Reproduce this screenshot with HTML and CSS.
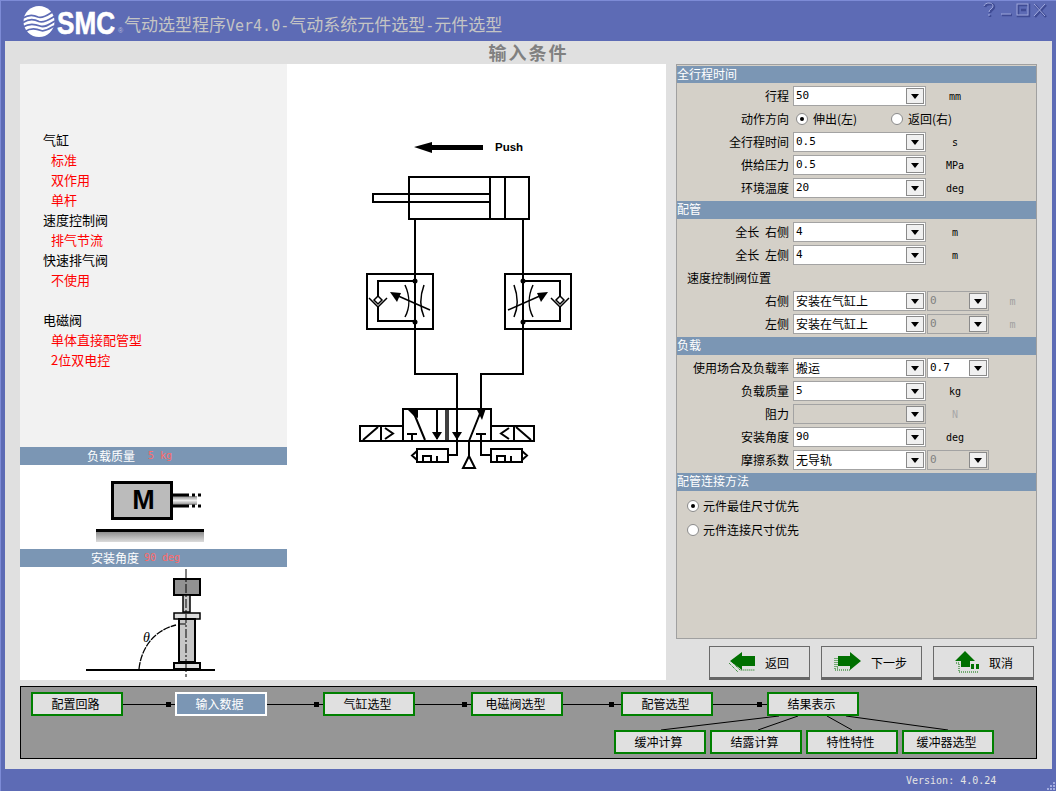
FILE: index.html
```html
<!DOCTYPE html>
<html lang="zh">
<head>
<meta charset="utf-8">
<title>SMC</title>
<link rel="stylesheet" href="styles.css">
</head>
<body>
<div class="window">
  <header class="titlebar">
    <svg class="logo" width="105" height="41" viewBox="0 0 105 41">
      <circle cx="16" cy="21.500" r="15.500" fill="#fff"/>
      <g fill="none" stroke="#5d6bb5" stroke-width="1.800">
        <path d="M0 18 C6 14 11 15 15 17 C20 19 26 14 31 11"/>
        <path d="M0 22.500 C6 18.500 12 19.500 16 21.500 C21 23.500 27 19 32 16"/>
        <path d="M0 27 C6 23 12 24 17 26 C22 28 27 24 32 21"/>
        <path d="M2 31.500 C8 27.500 13 28.500 18 30.500 C22 32 26 29 31 26"/>
      </g>
      <text class="logo-word" x="34" y="33.500" textLength="58" lengthAdjust="spacingAndGlyphs">SMC</text>
      <text class="logo-reg" x="95" y="33">®</text>
    </svg>
    <h1 class="apptitle">气动选型程序<span class="lat-t">Ver4.0-</span>气动系统元件选型<span class="lat-t">-</span>元件选型</h1>
    <svg class="winctl" width="66" height="17" viewBox="0 0 66 17">
      <g fill="none" stroke="#3f4b94" stroke-width="2.500">
        <path d="M3 5 C4 1 12 1 12 5 C12 8 8 8 8 11 M8 13 V15"/>
        <path d="M20 13 H30"/>
        <rect x="36" y="3" width="11" height="11"/>
        <path d="M39 8 H44"/>
        <path d="M53 3 L64 15 M64 3 L53 15"/>
      </g>
      <g fill="none" stroke="#a3acdf" stroke-width="1">
        <path d="M2 4 C3 0 11 0 11 4 C11 7 7 7 7 10 M7 12 V14"/>
        <path d="M19 12 H29"/>
        <rect x="35" y="2" width="11" height="11"/>
        <path d="M52 2 L63 14 M63 2 L52 14"/>
      </g>
    </svg>
  </header>

  <div class="content">
    <h2 class="heading">输入条件</h2>
    <div class="main">
      <aside class="side">
        <div class="summary">
          <p>气缸</p>
          <p class="red">标准</p>
          <p class="red">双作用</p>
          <p class="red">单杆</p>
          <p>速度控制阀</p>
          <p class="red">排气节流</p>
          <p>快速排气阀</p>
          <p class="red">不使用</p>
          <p>&nbsp;</p>
          <p>电磁阀</p>
          <p class="red">单体直接配管型</p>
          <p class="red">2位双电控</p>
        </div>
        <div class="side-head pad-a"><span>负载质量</span><span class="pink">5 kg</span></div>
        <div class="pic pic-load">
          <svg width="267" height="84" viewBox="20 465 267 84">
            <defs>
              <linearGradient id="rod" x1="0" y1="0" x2="0" y2="1">
                <stop offset="0" stop-color="#888"/><stop offset=".5" stop-color="#eee"/><stop offset="1" stop-color="#888"/>
              </linearGradient>
              <linearGradient id="base" x1="0" y1="0" x2="0" y2="1">
                <stop offset="0" stop-color="#8e8e8e"/><stop offset="1" stop-color="#dcdcdc"/>
              </linearGradient>
            </defs>
            <rect x="112.500" y="482.500" width="59" height="36" fill="#bbb" stroke="#000" stroke-width="3"/>
            <text class="mass-m" x="143.500" y="509" text-anchor="middle">M</text>
            <rect x="173" y="496" width="24" height="9" fill="url(#rod)"/>
            <path d="M173 495 H189 M192 495 H195 M198 495 H201 M173 506 H189 M192 506 H195 M198 506 H201" stroke="#000" stroke-width="3"/>
            <rect x="96" y="529" width="108" height="3" fill="#000"/>
            <rect x="96" y="532" width="108" height="10" fill="url(#base)"/>
          </svg>
        </div>
        <div class="side-head pad-b"><span>安装角度</span><span class="pink">90 deg</span></div>
        <div class="pic pic-angle">
          <svg width="267" height="113" viewBox="20 567 267 113">
            <rect x="174" y="579" width="26" height="16" fill="#929292" stroke="#000" stroke-width="2"/>
            <rect x="183" y="595" width="7" height="17" fill="#c6c6c6" stroke="#000" stroke-width="1.500"/>
            <rect x="174" y="613" width="26" height="6" fill="#ddd" stroke="#000" stroke-width="1.500"/>
            <rect x="179" y="619" width="16" height="43" fill="#c6c6c6" stroke="#000" stroke-width="2"/>
            <rect x="174" y="663" width="26" height="6" fill="#ddd" stroke="#000" stroke-width="2"/>
            <path d="M86 670 H215" stroke="#000" stroke-width="2"/>
            <path d="M186 569 V677" stroke="#000" stroke-width="1" stroke-dasharray="9 2 2 2"/>
            <path d="M139 669 C141 650 152 631 176 625" fill="none" stroke="#000" stroke-width="1.300" stroke-dasharray="7 1"/>
            <path d="M179 624 H186" stroke="#000"/>
            <text class="theta" x="143" y="642">θ</text>
          </svg>
        </div>
      </aside>

      <section class="canvas">
        <svg width="379" height="616" viewBox="287 64 379 616">
          <g fill="none" stroke="#000" stroke-width="2">
            <rect x="409" y="177" width="120" height="42"/>
            <path d="M490 177 V219 M505 177 V219"/>
            <rect x="373" y="194" width="117" height="8"/>
            <path d="M415 219 V374 H457 V455 H448"/>
            <path d="M523 219 V374 H481 V409"/>
            <g>
              <rect x="367" y="274" width="66" height="55"/>
              <path d="M415 281 H378 V296 M378 307 V321 H415"/>
              <path d="M369 298 L378 307 L387 298" stroke-width="1.500"/>
              <path d="M374 300 L378 296 L382 300 L378 304 Z" stroke-width="1.500"/>
              <path d="M405 285 C410 296 410 308 405 317" stroke-width="1.500"/>
              <path d="M424 285 C420 296 420 308 424 317" stroke-width="1.500"/>
              <path d="M430 310 L396 295" stroke-width="1.500"/>
              <path d="M390 292 L401 293 L397 302 Z" fill="#000" stroke="none"/>
              <circle cx="415" cy="281" r="2.500" fill="#000" stroke="none"/>
              <circle cx="415" cy="322" r="2.500" fill="#000" stroke="none"/>
            </g>
            <g transform="matrix(-1 0 0 1 938 0)">
              <rect x="367" y="274" width="66" height="55"/>
              <path d="M415 281 H378 V296 M378 307 V321 H415"/>
              <path d="M369 298 L378 307 L387 298" stroke-width="1.500"/>
              <path d="M374 300 L378 296 L382 300 L378 304 Z" stroke-width="1.500"/>
              <path d="M405 285 C410 296 410 308 405 317" stroke-width="1.500"/>
              <path d="M424 285 C420 296 420 308 424 317" stroke-width="1.500"/>
              <path d="M430 310 L396 295" stroke-width="1.500"/>
              <path d="M390 292 L401 293 L397 302 Z" fill="#000" stroke="none"/>
              <circle cx="415" cy="281" r="2.500" fill="#000" stroke="none"/>
              <circle cx="415" cy="322" r="2.500" fill="#000" stroke="none"/>
            </g>
            <rect x="403" y="409" width="88" height="32"/>
            <path d="M446 409 V441 M448 409 V441" stroke-width="1.500"/>
            <rect x="360" y="426" width="43" height="15"/>
            <path d="M381 426 V441 M363 440 L378 427 M385 428 L393 433.500 L385 439"/>
            <rect x="491" y="426" width="43" height="15"/>
            <path d="M514 426 V441 M531 440 L516 427 M509 428 L501 433.500 L509 439"/>
            <path d="M425 440 L413 411 M437 409 V439 M469 441 L481 411 M412 441 V434 M407 434 H417 M481 441 V434 M476 434 H486"/>
            <path d="M481 441 V455 H491"/>
            <path d="M469 441 V458"/>
            <path d="M469 456 L463 468 H475 Z"/>
            <rect x="417" y="449" width="31" height="13"/>
            <path d="M417 451 L412 455.500 L417 460 M423 462 V456 H431 V462 M437 456 V462"/>
            <rect x="491" y="449" width="31" height="13"/>
            <path d="M522 451 L527 455.500 L522 460 M497 462 V456 H505 V462 M511 456 V462"/>
          </g>
          <g fill="#000">
            <path d="M414 147 L432 142 V145 H483 V150 H432 V153 Z"/>
            <path d="M408 410 L413 408 L418 408 L418 418 L414 416 Z"/>
            <path d="M476 408 L486 408 L482 420 Z"/>
            <path d="M432 432 H442 L437 440 Z"/>
            <path d="M452 432 H462 L457 440 Z"/>
          </g>
          <text class="push" x="495" y="151">Push</text>
        </svg>
      </section>

      <div class="rightcol">
        <form class="panel">
          <h3 class="sec sec-first">全行程时间</h3>
          <div class="body">
            <div class="row"><label class="lbl">行程</label><div class="combo"><span class="val">50</span><i class="btn"></i></div><span class="unit">mm</span></div>
            <div class="row"><label class="lbl">动作方向</label><div class="radios"><span class="ritem"><i class="radio on"></i>伸出(左)</span><span class="ritem"><i class="radio"></i>返回(右)</span></div></div>
            <div class="row"><label class="lbl">全行程时间</label><div class="combo"><span class="val">0.5</span><i class="btn"></i></div><span class="unit">s</span></div>
            <div class="row"><label class="lbl">供给压力</label><div class="combo"><span class="val">0.5</span><i class="btn"></i></div><span class="unit">MPa</span></div>
            <div class="row"><label class="lbl">环境温度</label><div class="combo"><span class="val">20</span><i class="btn"></i></div><span class="unit">deg</span></div>
          </div>
          <h3 class="sec">配管</h3>
          <div class="body">
            <div class="row"><label class="lbl">全长 右侧</label><div class="combo"><span class="val">4</span><i class="btn"></i></div><span class="unit">m</span></div>
            <div class="row"><label class="lbl">全长 左侧</label><div class="combo"><span class="val">4</span><i class="btn"></i></div><span class="unit">m</span></div>
            <div class="row"><span class="free">速度控制阀位置</span></div>
            <div class="row"><label class="lbl">右侧</label><div class="combo"><span class="txt">安装在气缸上</span><i class="btn"></i></div><div class="combo small off"><span class="val">0</span><i class="btn"></i></div><span class="unit2">m</span></div>
            <div class="row"><label class="lbl">左侧</label><div class="combo"><span class="txt">安装在气缸上</span><i class="btn"></i></div><div class="combo small off"><span class="val">0</span><i class="btn"></i></div><span class="unit2">m</span></div>
          </div>
          <h3 class="sec">负载</h3>
          <div class="body">
            <div class="row"><label class="lbl">使用场合及负载率</label><div class="combo"><span class="txt">搬运</span><i class="btn"></i></div><div class="combo small"><span class="val">0.7</span><i class="btn"></i></div></div>
            <div class="row"><label class="lbl">负载质量</label><div class="combo"><span class="val">5</span><i class="btn"></i></div><span class="unit">kg</span></div>
            <div class="row"><label class="lbl">阻力</label><div class="combo off"><span class="val"></span><i class="btn"></i></div><span class="unit dim">N</span></div>
            <div class="row"><label class="lbl">安装角度</label><div class="combo"><span class="val">90</span><i class="btn"></i></div><span class="unit">deg</span></div>
            <div class="row"><label class="lbl">摩擦系数</label><div class="combo"><span class="txt">无导轨</span><i class="btn"></i></div><div class="combo small off"><span class="val">0</span><i class="btn"></i></div></div>
          </div>
          <h3 class="sec">配管连接方法</h3>
          <div class="body body-radio">
            <div class="row"><span class="ritem2"><i class="radio on"></i>元件最佳尺寸优先</span></div>
            <div class="row"><span class="ritem2"><i class="radio"></i>元件连接尺寸优先</span></div>
          </div>
        </form>
        <div class="actions">
          <button class="action" type="button">
            <svg width="28" height="24" viewBox="0 0 28 24">
              <path d="M2 11 L14 2 V6 H27 V16 H14 V20 Z" fill="#007000"/>
              <path d="M1 13 L10 22 M4 12 L12 20 H27" fill="none" stroke="#007000" stroke-dasharray="1 1"/>
            </svg>
            <span>返回</span>
          </button>
          <button class="action" type="button">
            <svg width="28" height="24" viewBox="0 0 28 24">
              <path d="M27 11 L16 2 V6 H4 V16 H16 V20 Z" fill="#007000"/>
              <path d="M1 8 V20 H16 M3 8 V18 H4" fill="none" stroke="#007000" stroke-dasharray="1 1"/>
            </svg>
            <span>下一步</span>
          </button>
          <button class="action" type="button">
            <svg width="28" height="24" viewBox="0 0 28 24">
              <path d="M13 1 L23 11 H18 V17 H9 V11 H3 Z" fill="#007000"/>
              <rect x="19" y="14" width="3" height="5" fill="#007000"/>
              <rect x="24" y="14" width="3" height="5" fill="#007000"/>
              <path d="M4 13 H7 V22 H26" fill="none" stroke="#007000" stroke-dasharray="1 1"/>
            </svg>
            <span>取消</span>
          </button>
        </div>
      </div>
    </div>

    <nav class="flow">
      <svg class="wires" width="1015" height="71" viewBox="21 687 1015 71">
        <g stroke="#000" fill="none">
          <path d="M123 704.500 H175 M267 704.500 H323 M415 704.500 H471 M563 704.500 H621 M713 704.500 H767"/>
          <path d="M779 716 L661 730 M798 716 L758 730 M827 716 L852 730 M846 716 L948 730"/>
        </g>
        <g fill="#000">
          <rect x="166" y="702" width="5" height="5"/>
          <rect x="314" y="702" width="5" height="5"/>
          <rect x="462" y="702" width="5" height="5"/>
          <rect x="609" y="702" width="5" height="5"/>
          <rect x="757" y="702" width="5" height="5"/>
        </g>
      </svg>
      <a class="node n1">配置回路</a>
      <a class="node n2 active">输入数据</a>
      <a class="node n3">气缸选型</a>
      <a class="node n4">电磁阀选型</a>
      <a class="node n5">配管选型</a>
      <a class="node n6">结果表示</a>
      <a class="node n7">缓冲计算</a>
      <a class="node n8">结露计算</a>
      <a class="node n9">特性特性</a>
      <a class="node n10">缓冲器选型</a>
    </nav>
  </div>

  <footer class="status">
    <span class="version">Version: 4.0.24</span>
    <svg class="grip" width="10" height="10" viewBox="0 0 10 10">
      <path d="M7 1h2v2h-2z M4 4h2v2h-2z M7 4h2v2h-2z M1 7h2v2h-2z M4 7h2v2h-2z M7 7h2v2h-2z" fill="#a3acdf"/>
    </svg>
  </footer>
</div>
</body>
</html>
```

FILE: styles.css
```css
* { box-sizing: border-box; }
html, body { margin: 0; padding: 0; background: #fff; }
body { width: 1056px; height: 792px; overflow: hidden; font-family: "Noto Sans CJK SC", "Liberation Sans", sans-serif; font-size: 12px; color: #000; }
h1, h2, h3, p { margin: 0; font-weight: normal; }

.window { width: 1056px; height: 791px; background: #5d6bb5; display: flex; flex-direction: column; box-shadow: inset 1px 1px 0 #7d8bd6; }

.titlebar { height: 41px; flex: none; display: flex; align-items: flex-start; padding-left: 23px; }
.logo { flex: none; }
.logo-word { font-family: "Liberation Sans", sans-serif; font-weight: bold; font-size: 32px; fill: #fff; stroke: #fff; stroke-width: .6px; }
.logo-reg { font-family: "Liberation Sans", sans-serif; font-size: 7px; fill: #b9bedd; }
.apptitle { font-size: 17px; line-height: 20px; margin: 14px 0 0 -4px; color: #c4c4c4; white-space: nowrap; }
.lat-t { font-family: "DejaVu Sans Mono", monospace; font-size: 15px; }
.winctl { margin: 2px 8px 0 auto; flex: none; }

.content { flex: 1; margin: 0 4px 0 5px; background: #e0e0e0; display: flex; flex-direction: column; }
.heading { height: 23px; flex: none; text-align: center; font-size: 18px; line-height: 23px; font-weight: bold; color: #808080; letter-spacing: 2px; }

.main { display: flex; height: 616px; flex: none; padding: 0 15px; }

.side { width: 267px; flex: none; display: flex; flex-direction: column; }
.summary { height: 383px; background: #f2f2f2; padding: 66px 0 0 23px; line-height: 20px; font-size: 13px; }
.summary .red { color: #f00; padding-left: 8px; }
.side-head { height: 18px; background: #7b96b4; color: #fff; display: flex; line-height: 17px; white-space: nowrap; }
.pad-a { padding-left: 67px; gap: 13px; }
.pad-b { padding-left: 71px; gap: 5px; }
.pink { font-family: "DejaVu Sans Mono", monospace; font-size: 10px; color: #ff6a6a; }
.pic { background: #fff; }
.pic svg { display: block; }
.pic-load { height: 84px; }
.pic-angle { height: 113px; }
.mass-m { font-family: "Liberation Sans", sans-serif; font-weight: bold; font-size: 27px; }
.theta { font-family: "Liberation Serif", serif; font-style: italic; font-size: 14px; }

.canvas { width: 379px; flex: none; background: #fff; }
.canvas svg { display: block; }
.push { font-family: "Liberation Sans", sans-serif; font-weight: bold; font-size: 11.500px; }

.rightcol { width: 361px; flex: none; margin-left: 10px; display: flex; flex-direction: column; }
.panel { height: 575px; flex: none; background: #d4d0c8; border: 1px solid #a0a0a0; }
.sec { height: 18px; background: #7b96b4; color: #fff; font-size: 12px; line-height: 16px; }
.sec-first { height: 17px; margin-top: 1px; }
.body { display: flex; flex-direction: column; gap: 3px; padding: 3px 0; }
.body-radio { gap: 4px; padding-top: 5px; }
.row { height: 20px; display: flex; align-items: center; white-space: nowrap; line-height: 18px; }
.lbl { width: 116px; padding-right: 4px; text-align: right; flex: none; word-spacing: 3px; }
.free { padding-left: 10px; }

.combo { width: 133px; height: 20px; flex: none; display: flex; align-items: stretch; background: #fff; border: 1px solid #a3a3a3; padding: 1px; }
.combo.small { width: 62px; margin-left: 1px; }
.combo.off { background: #d4d0c8; }
.combo.off .val { color: #808080; }
.val, .txt { flex: 1; padding-left: 1px; line-height: 16px; }
.val { font-family: "DejaVu Sans Mono", monospace; font-size: 11px; }
.btn { width: 18px; flex: none; background: #f0f0f0; border: 1px solid #8a8a8a; position: relative; }
.btn::after { content: ""; position: absolute; left: 4px; top: 5px; border-left: 4px solid transparent; border-right: 4px solid transparent; border-top: 5px solid #000; }

.unit { width: 58px; text-align: center; font-family: "DejaVu Sans Mono", monospace; font-size: 10px; padding-top: 2px; opacity: .99; }
.unit.dim { color: #a8a8a8; }
.unit2 { width: 48px; text-align: center; font-family: "DejaVu Sans Mono", monospace; font-size: 10px; color: #a0a0a0; padding-top: 2px; opacity: .99; }

.radios { display: flex; padding-left: 3px; }
.ritem { width: 95px; display: flex; align-items: center; gap: 5px; }
.ritem2 { display: flex; align-items: center; gap: 4px; padding-left: 10px; }
.radio { width: 12px; height: 12px; flex: none; border-radius: 50%; background: #fff; border: 1px solid #8a8a8a; position: relative; }
.radio.on::after { content: ""; position: absolute; left: 3px; top: 3px; width: 4px; height: 4px; border-radius: 50%; background: #000; }

.actions { display: flex; gap: 11px; padding: 7px 0 0 33px; }
.action { width: 101px; height: 34px; padding: 0 2px 0 0; display: flex; align-items: center; justify-content: center; gap: 9px; background: #e0e0e0; border: 1px solid #6a6a6a; border-bottom: 3px solid #666; font: inherit; color: #000; }
.action svg { display: block; flex: none; }

.flow { height: 73px; flex: none; margin: 6px 15px 0; background: #969696; border: 1px solid #000; position: relative; }
.wires { position: absolute; left: 0; top: 0; }
.node { position: absolute; width: 92px; height: 24px; padding-right: 3px; background: #e0e0e0; border: 2px solid #008000; text-align: center; line-height: 19px; color: #000; white-space: nowrap; }
.node.active { background: #7b96b4; border-color: #fff; color: #fff; }
.n1 { left: 10px; top: 5px; }
.n2 { left: 154px; top: 5px; }
.n3 { left: 302px; top: 5px; }
.n4 { left: 450px; top: 5px; }
.n5 { left: 600px; top: 5px; }
.n6 { left: 746px; top: 5px; }
.n7 { left: 593px; top: 43px; }
.n8 { left: 689px; top: 43px; }
.n9 { left: 785px; top: 43px; }
.n10 { left: 881px; top: 43px; }

.status { height: 22px; flex: none; display: flex; align-items: center; padding-left: 906px; position: relative; }
.version { font-family: "DejaVu Sans Mono", monospace; font-size: 10px; color: #e4e4e4; line-height: 22px; padding-top: 1px; }
.grip { position: absolute; right: 0; bottom: 0; }
```
